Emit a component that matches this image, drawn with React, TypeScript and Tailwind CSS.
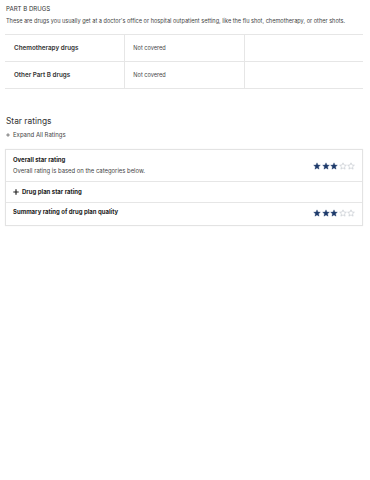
import React from "react";

const Star = ({ filled }: { filled: boolean }) => (
  <svg width="8" height="8" viewBox="0 0 24 24">
    <path
      d="M12 2.5l2.9 6.6 7.1.6-5.4 4.7 1.6 7-6.2-3.7-6.2 3.7 1.6-7L2 9.7l7.1-.6z"
      fill={filled ? "#1d3a6b" : "none"}
      stroke={filled ? "#1d3a6b" : "#b8bcc4"}
      strokeWidth={filled ? 1 : 1.6}
      strokeLinejoin="round"
    />
  </svg>
);

const Stars = ({ n }: { n: number }) => (
  <div className="flex gap-[0.5px]">
    {[0, 1, 2, 3, 4].map((i) => (
      <Star key={i} filled={i < n} />
    ))}
  </div>
);

const Plus = ({ size, w, color }: { size: number; w: number; color: string }) => (
  <svg width={size} height={size} viewBox="0 0 10 10">
    <path d="M5 0.5v9M0.5 5h9" stroke={color} strokeWidth={w} />
  </svg>
);

export default function App() {
  return (
    <div
      className="w-[370px] h-[480px] bg-white text-[#333] pl-[6px] pr-[6px] pt-[6px] leading-[6px]"
      style={{ fontFamily: "Inter, 'Noto Sans', sans-serif" }}
    >
      <div className="h-[6px] flex items-center text-[6.1px] leading-[6px] text-[#333]">PART B DRUGS</div>
      <div className="h-[6px] flex items-center text-[5.6px] leading-[6px] mt-[6px] text-[#444] whitespace-nowrap">
        These are drugs you usually get at a doctor's office or hospital outpatient setting, like the flu shot, chemotherapy, or other shots.
      </div>
      <div className="mt-[10px] border-t border-[#e6e6e6] -ml-[1px] mr-[1px]">
        {["Chemotherapy drugs", "Other Part B drugs"].map((t) => (
          <div key={t} className="grid grid-cols-3 border-b border-[#e6e6e6] h-[27px]">
            <div className="flex items-center pl-[9px] text-[6.3px] font-semibold text-[#333]">{t}</div>
            <div className="flex items-center pl-[8px] border-l border-[#e6e6e6] text-[5.6px] text-[#444]">Not covered</div>
            <div className="border-l border-[#e6e6e6]"></div>
          </div>
        ))}
      </div>
      <div className="mt-[27px] h-[10px] flex items-center text-[8.4px] leading-[10px] text-[#333]">Star ratings</div>
      <div className="mt-[6px] h-[6px] flex items-center gap-[3px] text-[6px] text-[#444]">
        <Plus size={4} w={1.8} color="#555" />
        <span>Expand All Ratings</span>
      </div>
      <div className="mt-[11px] border border-[#e3e3e3] shadow-[0_0_1px_rgba(0,0,0,0.08)] -ml-[1px] mr-[1px]">
        <div className="flex items-center justify-between pl-[7px] pr-[7px] h-[32px] border-b border-[#e6e6e6]">
          <div>
            <div className="h-[6px] flex items-center text-[6px] leading-[6px] font-bold text-[#222]">Overall star rating</div>
            <div className="h-[6px] flex items-center text-[5.9px] leading-[6px] mt-[5px] text-[#444]">Overall rating is based on the categories below.</div>
          </div>
          <div><Stars n={3} /></div>
        </div>
        <div className="flex items-center gap-[3px] pl-[7px] h-[21px] border-b border-[#e6e6e6]">
          <Plus size={6} w={2} color="#222" />
          <span className="h-[6px] flex items-center text-[6px] leading-[6px] font-bold text-[#222]">Drug plan star rating</span>
        </div>
        <div className="flex items-center justify-between pl-[7px] pr-[7px] h-[22px]">
          <div className="h-[6px] flex items-center text-[6px] leading-[6px] font-bold text-[#222] -mt-[4px]">Summary rating of drug plan quality</div>
          <div className="-mt-[2px]"><Stars n={3} /></div>
        </div>
      </div>
    </div>
  );
}
